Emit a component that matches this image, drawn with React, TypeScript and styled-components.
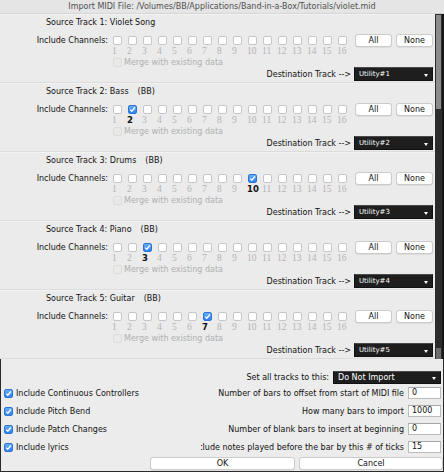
import React, { FC } from 'react'
import styled, { createGlobalStyle } from 'styled-components'

const GlobalStyle = createGlobalStyle`
  html, body {
    margin: 0;
    padding: 0;
    background: #ececec;
  }
  body {
    font-family: 'DejaVu Sans', 'Liberation Sans', sans-serif;
    font-size: 8px;
    color: #111111;
  }
  * {
    box-sizing: border-box;
  }
`

interface Track {
  name: string
  bb?: boolean
  channel?: number
  dest: string
}

const TRACKS: Track[] = [
  { name: 'Violet Song', dest: 'Utility#1' },
  { name: 'Bass', bb: true, channel: 2, dest: 'Utility#2' },
  { name: 'Drums', bb: true, channel: 10, dest: 'Utility#3' },
  { name: 'Piano', bb: true, channel: 3, dest: 'Utility#4' },
  { name: 'Guitar', bb: true, channel: 7, dest: 'Utility#5' },
]

const CHANNELS = Array.from({ length: 16 }, (_, i) => i + 1)

const OPTIONS = [
  { check: 'Include Continuous Controllers', label: 'Number of bars to offset from start of MIDI file', value: '0' },
  { check: 'Include Pitch Bend', label: 'How many bars to import', value: '1000' },
  { check: 'Include Patch Changes', label: 'Number of blank bars to insert at beginning', value: '0' },
  { check: 'Include lyrics', label: 'Include notes played before the bar by this # of ticks', value: '15' },
]

const Window = styled.div`
  width: 444px;
  height: 472px;
  display: flex;
  flex-direction: column;
  background: #ececec;
  overflow: hidden;
`

const TitleBar = styled.div`
  height: 14px;
  line-height: 13px;
  text-align: center;
  color: #505050;
  background: #e5e5e5;
  border-bottom: 1px solid #d6d6d6;
  white-space: nowrap;
`

const ScrollArea = styled.div`
  height: 345px;
  display: flex;
`

const Tracks = styled.div`
  flex: 1;
  overflow: hidden;
`

// one block per source track, with a soft separator under it
const TrackPanel = styled.div`
  height: 69px;
  display: flex;
  flex-direction: column;
  padding: 2px 2px 1px 0;
  background: #ebebeb;
  border-bottom: 1px solid #dcdcdc;
  box-shadow: inset 0 1px 0 #f3f3f3;
`

const TitleRow = styled.div`
  height: 13px;
  display: flex;
  align-items: center;
  padding-left: 46px;
  white-space: nowrap;
`

const BB = styled.span`
  margin-left: 9px;
`

const ChannelRow = styled.div`
  height: 12px;
  margin-top: 5px;
  display: flex;
  align-items: center;
`

const RowLabel = styled.div`
  width: 108px;
  text-align: right;
  white-space: nowrap;
`

const ChannelGrid = styled.div`
  display: grid;
  grid-template-columns: repeat(16, 15px);
  margin-left: 5px;
  align-items: center;
`

const Box = styled.span<{ $checked?: boolean; $disabled?: boolean }>`
  width: 9px;
  height: 9px;
  display: flex;
  align-items: center;
  justify-content: center;
  border-radius: 2px;
  border: 1px solid ${(p) => (p.$checked ? '#2f74d4' : p.$disabled ? '#dcdcdc' : '#c6c6c6')};
  background: ${(p) =>
    p.$checked ? 'linear-gradient(#66aef8, #2d82f1)' : p.$disabled ? '#e9e9e9' : '#ffffff'};
  flex-shrink: 0;
`

const NumberRow = styled.div`
  height: 11px;
  padding-left: 113px;
  display: grid;
  grid-template-columns: repeat(16, 15px);
  align-items: center;
`

const Num = styled.span<{ $on?: boolean }>`
  margin-left: -1px;
  line-height: 11px;
  font-family: ${(p) => (p.$on ? "'DejaVu Sans', sans-serif" : "'Liberation Serif', serif")};
  font-size: ${(p) => (p.$on ? '8.5px' : '9.5px')};
  font-weight: ${(p) => (p.$on ? 'bold' : 'normal')};
  color: ${(p) => (p.$on ? '#111111' : '#b4b4b4')};
`

const MergeRow = styled.div`
  height: 10px;
  padding-left: 113px;
  display: flex;
  align-items: center;
  gap: 2px;
  color: #b0b0b0;
  white-space: nowrap;
`

const DestRow = styled.div`
  height: 14px;
  display: flex;
  align-items: center;
  justify-content: flex-end;
  white-space: nowrap;
`

const DestLabel = styled.span`
  margin-right: 3px;
`

const Dropdown = styled.div<{ $width: number; $height: number; $size: number }>`
  position: relative;
  width: ${(p) => p.$width}px;
  height: ${(p) => p.$height}px;
  padding-left: 4px;
  display: flex;
  align-items: center;
  font-size: ${(p) => p.$size}px;
  color: #ffffff;
  background: #1e1e1e;
  border: 1px solid #111111;
  border-top-color: #4a4a4a;
  white-space: nowrap;

  &::after {
    content: '';
    position: absolute;
    right: 4px;
    bottom: 3px;
    border-left: 2.5px solid transparent;
    border-right: 2.5px solid transparent;
    border-top: 3px solid #ffffff;
  }
`

const Button = styled.div<{ $width?: number }>`
  height: 13px;
  ${(p) => (p.$width ? `width: ${p.$width}px;` : 'flex: 1;')}
  display: flex;
  align-items: center;
  justify-content: center;
  background: #ffffff;
  border: 1px solid #cbcbcb;
  border-radius: 3px;
  box-shadow: 0 0.5px 0 rgba(0, 0, 0, 0.12);
`

const ChannelButtons = styled.div`
  display: flex;
  gap: 4px;
  margin-left: 2px;
`

const ScrollBar = styled.div`
  width: 9px;
  display: flex;
  flex-direction: column;
  background: #2c2c2c;
  border-right: 2px solid #151515;
`

const Thumb = styled.div`
  height: 94px;
  margin: 1px 1px 0 1px;
  background: #8b8b8b;
`

const ScrollRest = styled.div`
  flex: 1;
`

const ScrollEnd = styled.div`
  height: 11px;
  margin: 0 1px;
  background: #6c6c6c;
`

const BottomPanel = styled.div`
  flex: 1;
  display: flex;
  flex-direction: column;
  padding-top: 11px;
  border-left: 1px solid #2a2a2a;
  border-right: 1px solid #2a2a2a;
  border-bottom: 1px solid #2a2a2a;
`

const SetAllRow = styled.div`
  height: 14px;
  display: flex;
  align-items: center;
  justify-content: flex-end;
  padding-right: 2px;
  white-space: nowrap;
`

const SetAllLabel = styled.span`
  margin-right: 4px;
`

const OptionRow = styled.div`
  height: 18px;
  display: grid;
  grid-template-columns: 200px 1fr;
  align-items: center;
`

const CheckItem = styled.div`
  display: flex;
  align-items: center;
  gap: 3px;
  padding-left: 3px;
  white-space: nowrap;
`

// the label is right aligned and runs off the left edge, as in the original
const Field = styled.div`
  display: flex;
  align-items: center;
  justify-content: flex-end;
  overflow: hidden;
  padding-right: 2px;
`

const FieldLabel = styled.span`
  flex-shrink: 0;
  margin-right: 4px;
  white-space: nowrap;
`

const Input = styled.div`
  width: 33px;
  height: 12px;
  flex-shrink: 0;
  padding: 0 0 0 3px;
  display: flex;
  align-items: flex-end;
  line-height: 10px;
  background: #ffffff;
  border: 1px solid #bcbcbc;
  border-top-color: #a8a8a8;
`

const ButtonRow = styled.div`
  height: 14px;
  margin-top: 1px;
  display: flex;
  gap: 4px;
  padding-left: 149px;
`

const CheckMark: FC = () => (
  <svg width='7' height='7' viewBox='0 0 7 7'>
    <path d='M1.2 3.6 L2.8 5.2 L5.9 1.5' fill='none' stroke='#ffffff' strokeWidth='1.3' />
  </svg>
)

const TrackSection: FC<{ index: number; track: Track }> = ({ index, track }) => (
  <TrackPanel>
    <TitleRow>
      Source Track {index}: {track.name}
      {track.bb && <BB>(BB)</BB>}
    </TitleRow>
    <ChannelRow>
      <RowLabel>Include Channels:</RowLabel>
      <ChannelGrid>
        {CHANNELS.map((c) => (
          <Box key={c} $checked={c === track.channel}>
            {c === track.channel && <CheckMark />}
          </Box>
        ))}
      </ChannelGrid>
      <ChannelButtons>
        <Button $width={37}>All</Button>
        <Button $width={37}>None</Button>
      </ChannelButtons>
    </ChannelRow>
    <NumberRow>
      {CHANNELS.map((c) => (
        <Num key={c} $on={c === track.channel}>
          {c}
        </Num>
      ))}
    </NumberRow>
    <MergeRow>
      <Box $disabled />
      Merge with existing data
    </MergeRow>
    <DestRow>
      <DestLabel>Destination Track --&gt;</DestLabel>
      <Dropdown $width={79} $height={14} $size={7}>
        {track.dest}
      </Dropdown>
    </DestRow>
  </TrackPanel>
)

const App: FC = () => (
  <>
    <GlobalStyle />
    <Window>
      <TitleBar>Import MIDI File: /Volumes/BB/Applications/Band-in-a-Box/Tutorials/violet.mid</TitleBar>
      <ScrollArea>
        <Tracks>
          {TRACKS.map((t, i) => (
            <TrackSection key={t.name} index={i + 1} track={t} />
          ))}
        </Tracks>
        <ScrollBar>
          <Thumb />
          <ScrollRest />
          <ScrollEnd />
        </ScrollBar>
      </ScrollArea>
      <BottomPanel>
        <SetAllRow>
          <SetAllLabel>Set all tracks to this:</SetAllLabel>
          <Dropdown $width={108} $height={13} $size={8}>
            Do Not Import
          </Dropdown>
        </SetAllRow>
        {OPTIONS.map((o) => (
          <OptionRow key={o.check}>
            <CheckItem>
              <Box $checked>
                <CheckMark />
              </Box>
              {o.check}
            </CheckItem>
            <Field>
              <FieldLabel>{o.label}</FieldLabel>
              <Input>{o.value}</Input>
            </Field>
          </OptionRow>
        ))}
        <ButtonRow>
          <Button $width={145}>OK</Button>
          <Button>Cancel</Button>
        </ButtonRow>
      </BottomPanel>
    </Window>
  </>
)

export default App
